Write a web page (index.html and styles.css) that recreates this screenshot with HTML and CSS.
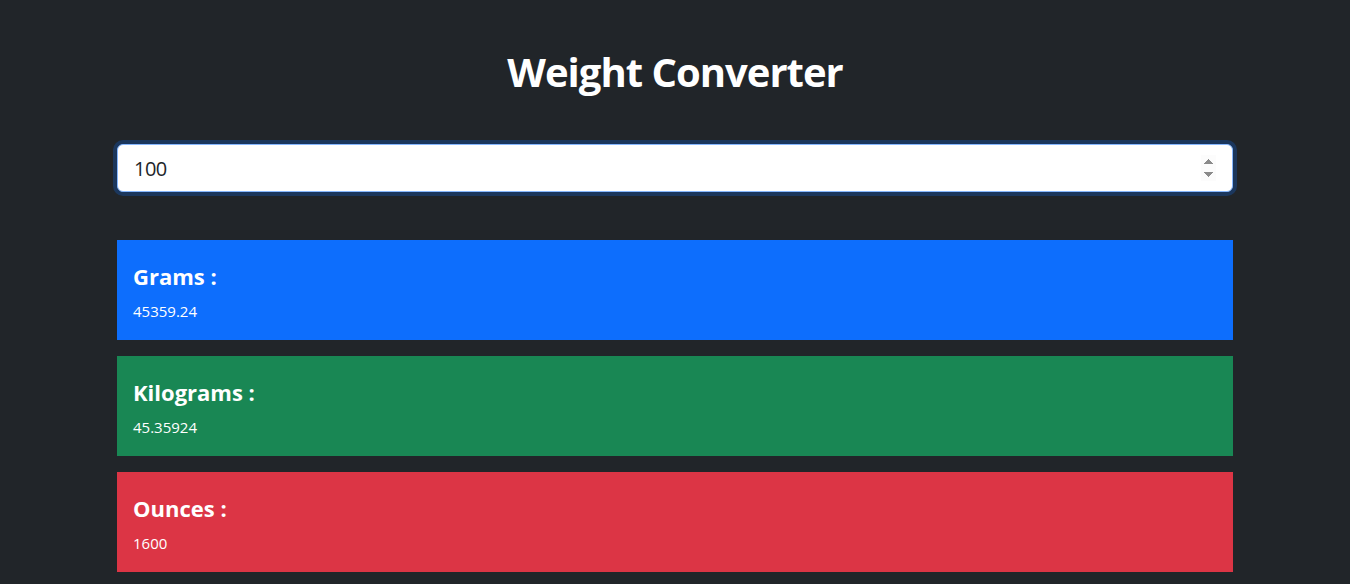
FILE: index.html
```html
<!DOCTYPE html>
<html lang="en">
<head>
<meta charset="utf-8">
<title>Weight Converter</title>
<link rel="stylesheet" href="styles.css">
</head>
<body>
<div class="container">
  <h1 class="title">Weight Converter</h1>
  <input class="pounds" type="number" value="100" autofocus>
  <div class="results">
    <div class="result result-blue">
      <h5 class="result-title">Grams :</h5>
      <p class="result-value">45359.24</p>
    </div>
    <div class="result result-green">
      <h5 class="result-title">Kilograms :</h5>
      <p class="result-value">45.35924</p>
    </div>
    <div class="result result-red">
      <h5 class="result-title">Ounces :</h5>
      <p class="result-value">1600</p>
    </div>
  </div>
</div>
</body>
</html>
```
FILE: styles.css
```css
* { box-sizing: border-box; }
html, body { margin: 0; padding: 0; }
body {
  background: #212529;
  color: #fff;
  font-family: "Open Sans", "Liberation Sans", sans-serif;
  overflow: hidden;
}
.container {
  max-width: 1140px;
  margin: 0 auto;
  padding: 48px 12px 0;
}
.title {
  margin: 0 0 48px;
  font-size: 40px;
  line-height: 48px;
  font-weight: 700;
  letter-spacing: -1px;
  text-align: center;
}
.pounds {
  display: block;
  width: 100%;
  height: 48px;
  padding: 8px 16px;
  font-family: inherit;
  font-size: 20px;
  letter-spacing: -0.5px;
  color: #212529;
  background: #fff;
  border: 1px solid #86b7fe;
  border-radius: 6px;
  box-shadow: 0 0 0 4px rgba(13, 110, 253, 0.25);
  outline: none;
  margin-bottom: 48px;
}
.results {
  display: flex;
  flex-direction: column;
  gap: 16px;
}
.result {
  height: 100px;
  padding: 23px 16px 0;
}
.result-blue { background: #0d6efd; }
.result-green { background: #198754; }
.result-red { background: #dc3545; }
.result-title {
  margin: 0 0 12px;
  font-size: 22px;
  line-height: 26px;
  font-weight: 700;
}
.result-value {
  margin: 0;
  font-size: 15px;
  line-height: 21px;
}
```
